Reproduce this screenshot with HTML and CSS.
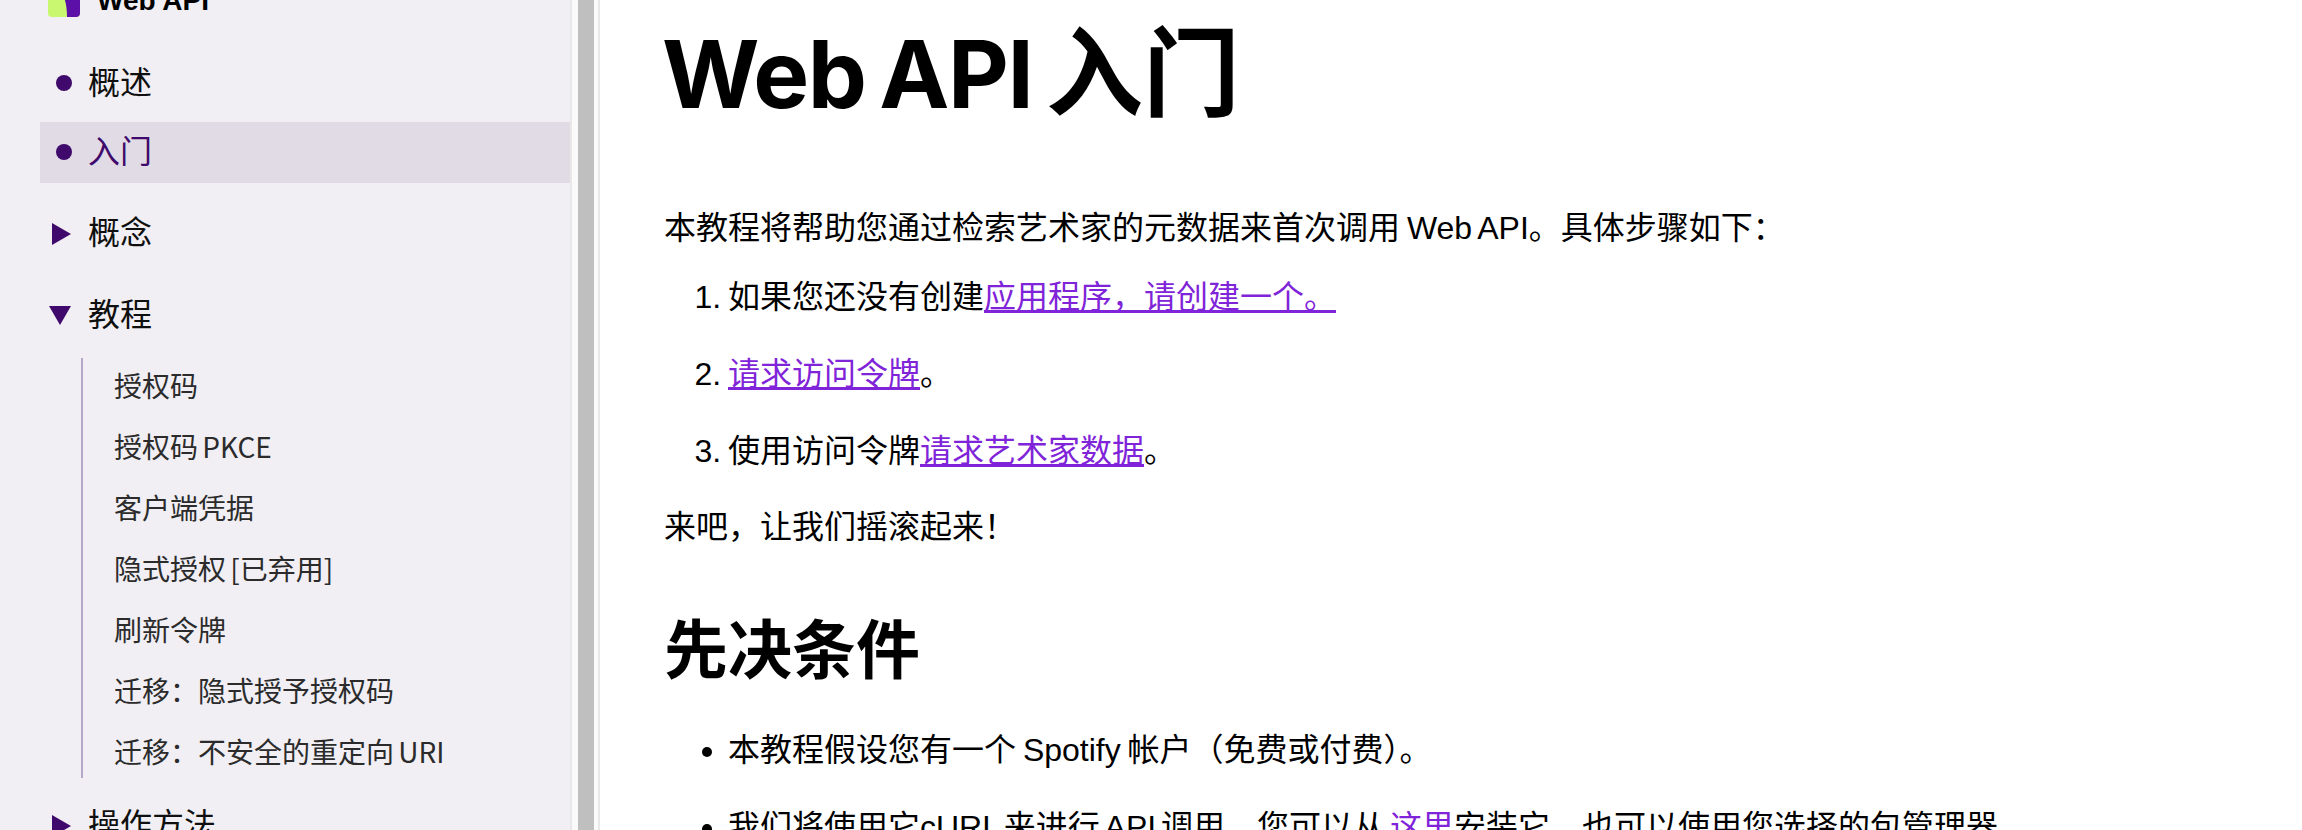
FILE: index.html
```html
<!DOCTYPE html>
<html lang="zh-CN">
<head>
    <meta charset="UTF-8">
    <title>Web API 入门</title>
    <link rel="stylesheet" href="styles.css">
</head>
<body>
    <div class="page">
        <nav class="sidebar">
            <div class="brand">
                <svg class="brand-logo" width="32" height="32" viewBox="0 0 32 32">
                    <rect width="32" height="32" rx="4" fill="#c9f76f"/>
                    <path d="M8 0H28a4 4 0 0 1 4 4V28a4 4 0 0 1-4 4H19C19 18 16 8 8 0Z" fill="#5c10a8"/>
                </svg>
                <span class="brand-name">Web API</span>
            </div>
            <ul class="nav">
                <li class="nav-item"><span class="dot"></span>概述</li>
                <li class="nav-item nav-active"><span class="dot"></span>入门</li>
                <li class="nav-item nav-group"><span class="arrow-right"></span>概念</li>
                <li class="nav-item nav-group"><span class="arrow-down"></span>教程</li>
            </ul>
            <ul class="subnav">
                <li>授权码</li>
                <li>授权码 PKCE</li>
                <li>客户端凭据</li>
                <li>隐式授权 [已弃用]</li>
                <li>刷新令牌</li>
                <li>迁移：隐式授予授权码</li>
                <li>迁移：不安全的重定向 URI</li>
            </ul>
            <ul class="nav">
                <li class="nav-item nav-last"><span class="arrow-right"></span>操作方法</li>
            </ul>
        </nav>
        <div class="scrollbar"><div class="scrollbar-thumb"></div></div>
        <main class="content">
            <h1>Web API <span class="h1-cjk">入门</span></h1>
            <p class="intro">本教程将帮助您通过检索艺术家的元数据来首次调用 Web API。具体步骤如下：</p>
            <ol>
                <li>如果您还没有创建<a href="#">应用程序，请创建一个。</a></li>
                <li><a href="#">请求访问令牌</a>。</li>
                <li>使用访问令牌<a href="#">请求艺术家数据</a>。</li>
            </ol>
            <p class="outro">来吧，让我们摇滚起来！</p>
            <h2>先决条件</h2>
            <ul class="prereq">
                <li>本教程假设您有一个 Spotify 帐户（免费或付费）。</li>
                <li>我们将使用它cURL 来进行 API 调用。您可以从 <a href="#">这里</a>安装它，也可以使用您选择的包管理器。</li>
            </ul>
        </main>
    </div>
</body>
</html>
```

FILE: styles.css
```css
* {
    box-sizing: border-box;
}
html, body {
    margin: 0;
    height: 830px;
    overflow: hidden;
}
body {
    font-family: "Liberation Sans", "Noto Sans CJK SC", sans-serif;
    font-size: 32px;
    line-height: 48px;
    word-spacing: -2px;
    color: #000;
    background-color: #fff;
}
ul, ol {
    margin: 0;
    padding: 0;
}
.page {
    display: flex;
    height: 830px;
}

/* sidebar */
.sidebar {
    width: 570px;
    flex-shrink: 0;
    padding-left: 40px;
    background-color: #f1eff4;
    overflow: hidden;
}
.brand {
    display: flex;
    align-items: center;
    gap: 17px;
    height: 32px;
    margin: -15px 0 36px 8px;
}
.brand-logo {
    flex-shrink: 0;
}
.brand-name {
    font-size: 28px;
    font-weight: 700;
    word-spacing: 0;
}
.nav {
    list-style: none;
}
.nav-item {
    position: relative;
    height: 61px;
    padding-left: 48px;
    line-height: 61px;
    color: #0f0f0f;
    margin-bottom: 8px;
}
.nav-active {
    color: #3f0a6b;
    background-color: #e1dbe6;
    margin-bottom: 20px;
}
.nav-group {
    margin-bottom: 21px;
}
.nav-group:last-child {
    margin-bottom: 12px;
}
.nav-last {
    margin-top: 17px;
}
.dot {
    position: absolute;
    left: 16px;
    top: 22px;
    width: 16px;
    height: 16px;
    border-radius: 50%;
    background-color: #3f0a6b;
}
.arrow-right {
    position: absolute;
    left: 12px;
    top: 20px;
    border-left: 19px solid #3f0a6b;
    border-top: 11px solid transparent;
    border-bottom: 11px solid transparent;
}
.arrow-down {
    position: absolute;
    left: 9px;
    top: 21px;
    border-top: 19px solid #3f0a6b;
    border-left: 11px solid transparent;
    border-right: 11px solid transparent;
}
.subnav {
    list-style: none;
    margin-left: 41px;
    padding: 6px 0;
    border-left: 2px solid #b6a7c8;
}
.subnav li {
    height: 42px;
    padding-left: 31px;
    margin-bottom: 19px;
    font-family: "Noto Sans CJK SC", sans-serif;
    font-size: 28px;
    line-height: 42px;
    color: #2b2b2b;
}
.subnav li:last-child {
    margin-bottom: 0;
}

/* fake scrollbar */
.scrollbar {
    width: 30px;
    flex-shrink: 0;
    padding: 0 4px 0 6px;
    background-color: #fafafa;
    border-left: 2px solid #e8e8e8;
    border-right: 2px solid #e8e8e8;
}
.scrollbar-thumb {
    width: 16px;
    height: 830px;
    background-color: #bfbfbf;
}

/* main content */
.content {
    flex: 1;
    padding: 0 64px;
}
h1 {
    margin: 0 0 75px -2px;
    padding-top: 11px;
    font-family: Inter, "Noto Sans CJK SC", sans-serif;
    font-size: 94px;
    line-height: 110px;
    font-weight: 700;
    letter-spacing: -1.5px;
    word-spacing: -7px;
}
.h1-cjk {
    font-family: "Noto Sans CJK SC", sans-serif;
    font-size: 97px;
    font-weight: 700;
    letter-spacing: 0;
}
p {
    margin: 0;
}
.intro {
    margin-bottom: 21px;
}
ol, .prereq {
    padding-left: 64px;
}
ol li {
    margin-bottom: 29px;
}
ol li:last-child {
    margin-bottom: 28px;
}
a {
    color: #7f24d8;
    text-decoration: underline;
    text-decoration-thickness: 3px;
}
h2 {
    margin: 57px 0 32px;
    font-size: 64px;
    line-height: 86px;
    font-weight: 700;
}
.prereq li {
    margin-bottom: 29px;
}
.prereq li:last-child {
    word-spacing: -4px;
}
```
